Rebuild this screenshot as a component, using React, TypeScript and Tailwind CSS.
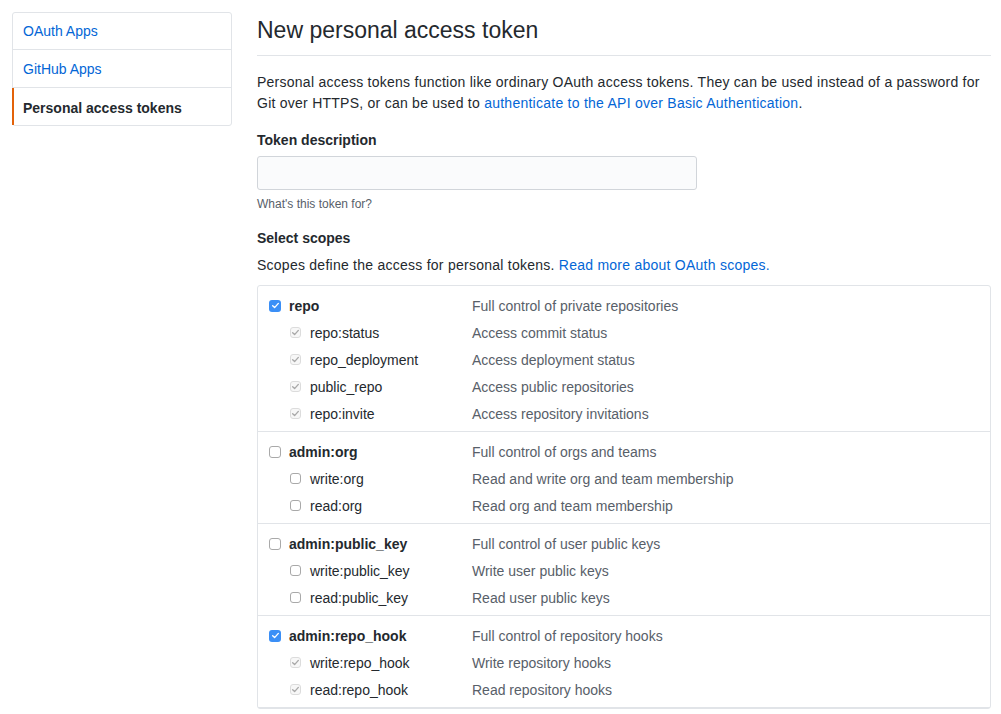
import React from "react";

type Scope = { name: string; desc: string; checked?: boolean };
type Group = { parent: Scope; children: Scope[] };

const groups: Group[] = [
  {
    parent: { name: "repo", desc: "Full control of private repositories", checked: true },
    children: [
      { name: "repo:status", desc: "Access commit status", checked: true },
      { name: "repo_deployment", desc: "Access deployment status", checked: true },
      { name: "public_repo", desc: "Access public repositories", checked: true },
      { name: "repo:invite", desc: "Access repository invitations", checked: true },
    ],
  },
  {
    parent: { name: "admin:org", desc: "Full control of orgs and teams" },
    children: [
      { name: "write:org", desc: "Read and write org and team membership" },
      { name: "read:org", desc: "Read org and team membership" },
    ],
  },
  {
    parent: { name: "admin:public_key", desc: "Full control of user public keys" },
    children: [
      { name: "write:public_key", desc: "Write user public keys" },
      { name: "read:public_key", desc: "Read user public keys" },
    ],
  },
  {
    parent: { name: "admin:repo_hook", desc: "Full control of repository hooks", checked: true },
    children: [
      { name: "write:repo_hook", desc: "Write repository hooks", checked: true },
      { name: "read:repo_hook", desc: "Read repository hooks", checked: true },
    ],
  },
];

const Check = ({ color }: { color: string }) => (
  <svg viewBox="0 0 12 12" className="w-[9px] h-[9px]" fill="none">
    <path d="M2.2 6.3 L4.8 8.8 L9.8 3.2" stroke={color} strokeWidth="1.8" strokeLinecap="round" strokeLinejoin="round" />
  </svg>
);

// parent boxes are live, children of a checked parent look disabled
const Box = ({ checked, parent }: { checked?: boolean; parent?: boolean }) => {
  if (checked && parent) {
    return (
      <span className="flex items-center justify-center w-[12px] h-[12px] rounded-[3px] bg-[#3b8ff6]">
        <Check color="#ffffff" />
      </span>
    );
  }
  if (checked) {
    return (
      <span className="flex items-center justify-center w-[11px] h-[11px] rounded-[3px] border border-[#dcdcdc] bg-[#f7f7f7]">
        <Check color="#a8a8a8" />
      </span>
    );
  }
  return (
    <span
      className={`block rounded-[3px] border border-[#a9a9a9] bg-white ${parent ? "w-[12px] h-[12px]" : "w-[11px] h-[11px]"}`}
    />
  );
};

const Row = ({ scope, parent }: { scope: Scope; parent?: boolean }) => (
  <div className="flex items-center h-[27px] pl-[11px]">
    <div className={`flex items-center w-[203px] ${parent ? "" : "pl-[21px]"}`}>
      <span className="w-[20px] shrink-0">
        <Box checked={scope.checked} parent={parent} />
      </span>
      <span className={`pt-px ${parent ? "font-bold text-[#24292e]" : "text-[#24292e]"}`}>{scope.name}</span>
    </div>
    <span className="pt-px text-[#586069]">{scope.desc}</span>
  </div>
);

export default function App() {
  return (
    <div
      className="flex gap-[25px] px-[12px] pt-[12px] bg-white text-[14px] leading-[21px] text-[#24292e] h-[714px] overflow-hidden"
      style={{ fontFamily: "'Liberation Sans', Arial, sans-serif" }}
    >
      {/* sidebar */}
      <nav className="w-[220px] shrink-0 self-start border border-[#e1e4e8] rounded-[3px]">
        <a className="block h-[37px] leading-[37px] px-[10px] text-[#0366d6] border-b border-[#e1e4e8]">OAuth Apps</a>
        <a className="block h-[38px] pt-px leading-[37px] px-[10px] text-[#0366d6] border-b border-[#e1e4e8]">GitHub Apps</a>
        <a className="block h-[37px] pt-[2px] leading-[36px] pl-[9px] pr-[10px] font-bold text-[#24292e] border-l-2 border-[#e36209] -ml-px">
          Personal access tokens
        </a>
      </nav>

      {/* main */}
      <div className="w-[734px] shrink-0">
        <h1 className="text-[23px] leading-[36px] font-normal pb-[7px] border-b border-[#e1e4e8]">
          New personal access token
        </h1>

        <p className="mt-[16px] tracking-[0.25px]">
          Personal access tokens function like ordinary OAuth access tokens. They can be used instead of a password for
          <br />
          Git over HTTPS, or can be used to{" "}
          <a className="text-[#0366d6]">authenticate to the API over Basic Authentication</a>.
        </p>

        <div className="mt-[16px] font-bold">Token description</div>
        <input className="mt-[5px] block w-[440px] h-[34px] rounded-[3px] border border-[#d1d5da] bg-[#fafbfc] px-2 outline-none" />
        <div className="mt-[5px] text-[12px] leading-[18px] text-[#586069]">What's this token for?</div>

        <div className="mt-[15px] font-bold">Select scopes</div>
        <p className="mt-[6px] tracking-[0.25px]">
          Scopes define the access for personal tokens. <a className="text-[#0366d6]">Read more about OAuth scopes.</a>
        </p>

        <div className="mt-[9px] border border-[#e1e4e8] rounded-[3px]">
          {groups.map((g) => (
            <div key={g.parent.name} className="pt-[6px] pb-[4px] border-b border-[#e1e4e8]">
              <Row scope={g.parent} parent />
              {g.children.map((c) => (
                <Row key={c.name} scope={c} />
              ))}
            </div>
          ))}
        </div>
      </div>
    </div>
  );
}
